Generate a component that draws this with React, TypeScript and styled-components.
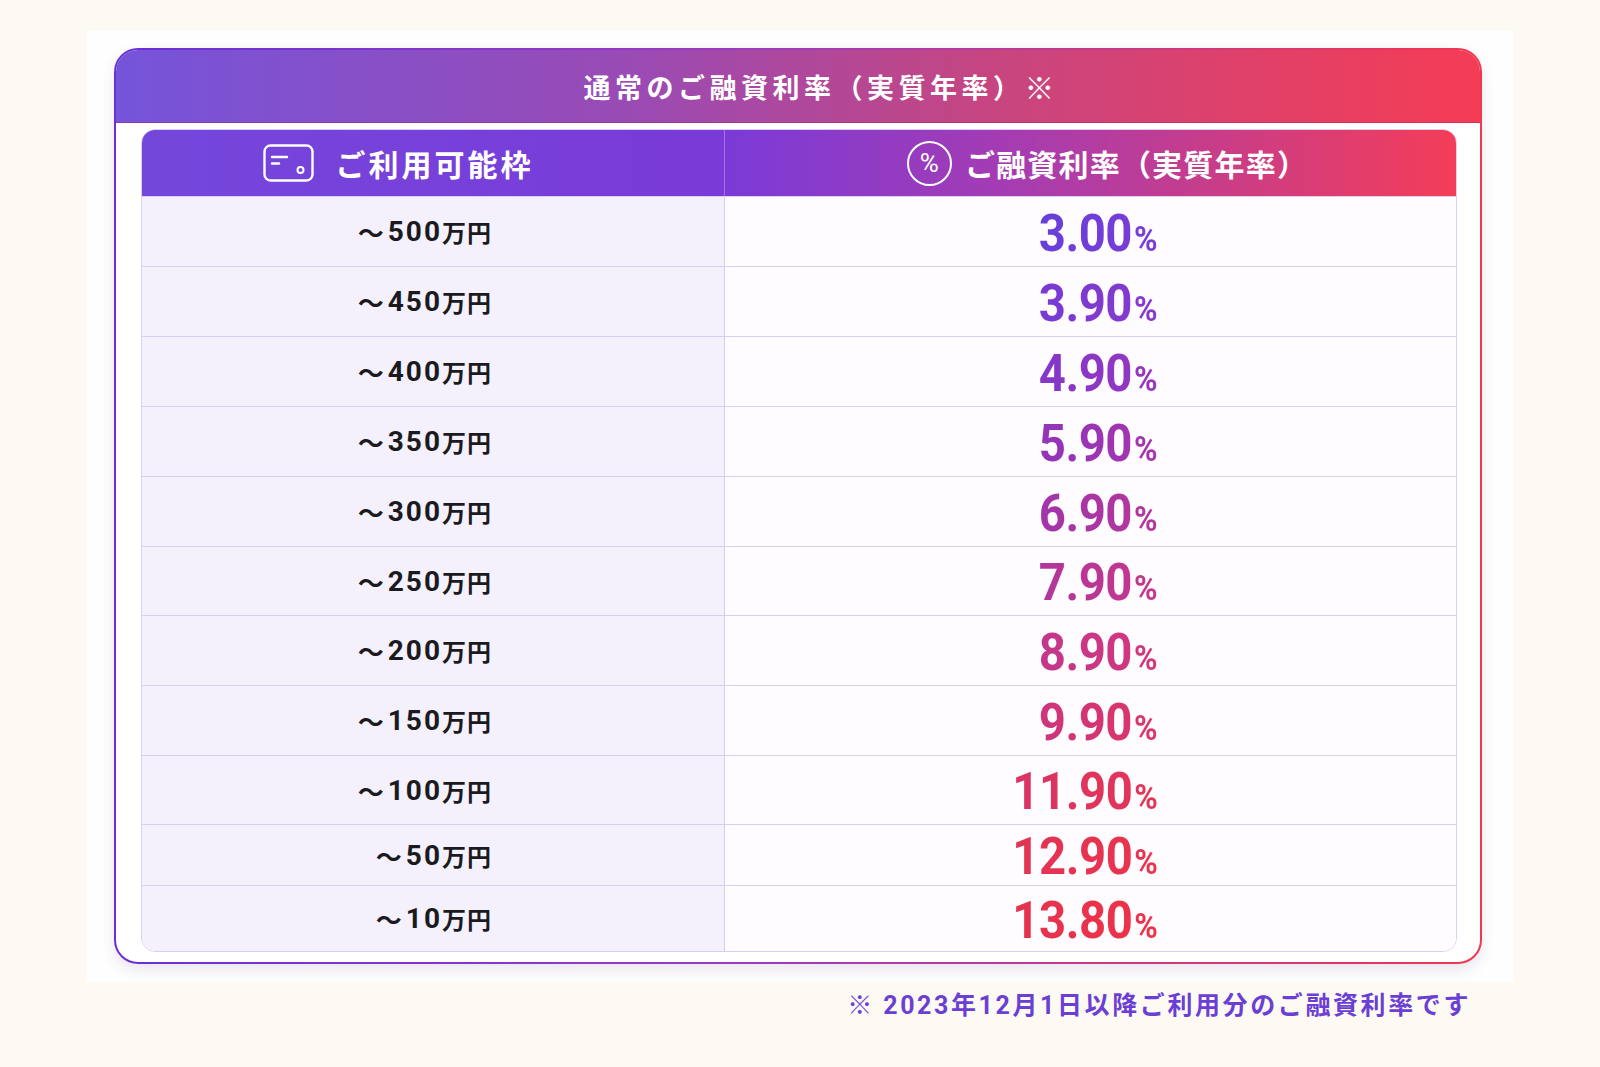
import styled, { createGlobalStyle } from 'styled-components'

const GlobalStyle = createGlobalStyle`
  body {
    margin: 0;
    background: #fdfaf3;
    font-family: 'Roboto', 'Noto Sans CJK JP', sans-serif;
  }
`

const Page = styled.div`
  display: flex;
  flex-direction: column;
  align-items: center;
  padding-top: 31px;
`

const Panel = styled.div`
  width: 1426px;
  box-sizing: border-box;
  background: #fefefe;
  padding: 17px 31px 18px 27px;
`

const Card = styled.div`
  display: flex;
  flex-direction: column;
  border: 2px solid transparent;
  border-radius: 24px;
  background:
    linear-gradient(#ffffff, #ffffff) padding-box,
    linear-gradient(90deg, #6a2fd8 0%, #9a3cc0 45%, #f2364f 100%) border-box;
  box-shadow: 0 6px 14px rgba(90, 50, 130, 0.12);
  padding-bottom: 10px;
`

const CardTitle = styled.div`
  height: 72px;
  display: flex;
  align-items: center;
  justify-content: center;
  padding-left: 46px;
  border-radius: 22px 22px 0 0;
  background: linear-gradient(90deg, #7554da 0%, #9a4bb4 38%, #c8457f 65%, #f53c55 100%);
  border-bottom: 1px solid rgba(170, 20, 80, 0.35);
  color: #ffffff;
  font-family: 'Noto Sans CJK JP', sans-serif;
  font-size: 27px;
  font-weight: 700;
  letter-spacing: 4.5px;
`

const Mark = styled.span`
  font-weight: 900;
  font-size: 1.1em;
`

const Table = styled.div`
  margin: 6px 23px 0 25px;
  border: 1px solid #dccff3;
  border-radius: 14px;
  overflow: hidden;
`

const HeadRow = styled.div`
  display: grid;
  grid-template-columns: 583px 1fr;
  height: 66px;
  background: linear-gradient(90deg, #7447db 0%, #7a3ad8 44%, #a53cb2 66%, #d23d7d 86%, #f43d58 100%);
`

const HeadCell = styled.div<{ $left?: boolean }>`
  display: flex;
  align-items: center;
  justify-content: center;
  gap: ${(p) => (p.$left ? '22px' : '13px')};
  padding: ${(p) => (p.$left ? '0 70px 0 0' : '0 0 0 34px')};
  border-right: ${(p) => (p.$left ? '1px solid rgba(255, 255, 255, 0.3)' : 'none')};
  color: #ffffff;
  font-family: 'Noto Sans CJK JP', sans-serif;
  font-size: 30px;
  font-weight: 700;
  letter-spacing: ${(p) => (p.$left ? '3px' : '1.2px')};
`

const PercentBadge = styled.span`
  width: 41px;
  height: 41px;
  border: 2px solid #ffffff;
  border-radius: 50%;
  display: flex;
  align-items: center;
  justify-content: center;
  font-family: 'Roboto', sans-serif;
  font-size: 26px;
  font-weight: 400;
  letter-spacing: 0;
`

const Row = styled.div<{ $h: number }>`
  display: grid;
  grid-template-columns: 583px 1fr;
  height: ${(p) => p.$h}px;
  border-top: 1px solid #dccff3;
  box-sizing: border-box;
`

const LimitCell = styled.div`
  display: flex;
  align-items: center;
  justify-content: flex-end;
  padding-right: 232px;
  background: #f5f1fc;
  border-right: 1px solid #d9cbf1;
  color: #1b1b1f;
  font-size: 28px;
  font-weight: 700;
  letter-spacing: 2px;
`

const Yen = styled.span`
  font-family: 'Noto Sans CJK JP', sans-serif;
  font-size: 24px;
  letter-spacing: 1px;
`

const Tilde = styled.span`
  font-family: 'Noto Sans CJK JP', sans-serif;
  font-size: 26px;
  margin-right: 2px;
`

const RateCell = styled.div`
  display: flex;
  align-items: center;
  justify-content: flex-end;
  padding-right: 299px;
  background: #fefcfe;
`

const Rate = styled.span<{ $from: string; $to: string }>`
  display: inline-block;
  font-family: 'Roboto', sans-serif;
  font-weight: 700;
  font-size: 52px;
  line-height: 1;
  letter-spacing: -0.5px;
  background: linear-gradient(90deg, ${(p) => p.$from}, ${(p) => p.$to});
  -webkit-background-clip: text;
  background-clip: text;
  color: transparent;
  padding-top: 4px;
  transform: scaleX(0.91);
  transform-origin: right center;
`

const Pct = styled.span`
  font-size: 35px;
  margin-left: 2px;
`

const Note = styled.div`
  width: 1426px;
  box-sizing: border-box;
  text-align: right;
  padding: 3px 42px 0 0;
  color: #6b3fd3;
  font-size: 25px;
  font-weight: 700;
  letter-spacing: 2.6px;
`

const NoteMark = styled.span`
  font-family: 'Noto Sans CJK JP', sans-serif;
  font-weight: 900;
`

const CardIcon = () => (
  <svg width="51" height="38" viewBox="0 0 51 38" fill="none" stroke="#ffffff" strokeWidth="2.4" strokeLinecap="round">
    <rect x="1.5" y="1.5" width="48" height="35" rx="6" />
    <line x1="9" y1="13" x2="24" y2="13" />
    <line x1="9" y1="19.5" x2="16" y2="19.5" />
    <circle cx="37.5" cy="26" r="3" strokeWidth="2" />
  </svg>
)

const rows = [
  { limit: '500', rate: '3.00', from: '#683fda', to: '#7a3cd6', h: 70 },
  { limit: '450', rate: '3.90', from: '#773bd3', to: '#8839cc', h: 70 },
  { limit: '400', rate: '4.90', from: '#8437c8', to: '#9636bf', h: 70 },
  { limit: '350', rate: '5.90', from: '#9234ba', to: '#a635ad', h: 70 },
  { limit: '300', rate: '6.90', from: '#a135aa', to: '#b5369c', h: 70 },
  { limit: '250', rate: '7.90', from: '#b1369c', to: '#c6378c', h: 69 },
  { limit: '200', rate: '8.90', from: '#c2378b', to: '#d4377b', h: 70 },
  { limit: '150', rate: '9.90', from: '#cd367c', to: '#dc356a', h: 70 },
  { limit: '100', rate: '11.90', from: '#d93564', to: '#e53456', h: 69 },
  { limit: '50', rate: '12.90', from: '#e13454', to: '#eb334e', h: 61 },
  { limit: '10', rate: '13.80', from: '#e4334e', to: '#ee3248', h: 66 },
]

const App = () => {
  return (
    <>
      <GlobalStyle />
      <Page>
        <Panel>
          <Card>
            <CardTitle>
              通常のご融資利率（実質年率）<Mark>※</Mark>
            </CardTitle>
            <Table>
              <HeadRow>
                <HeadCell $left>
                  <CardIcon />
                  <span>ご利用可能枠</span>
                </HeadCell>
                <HeadCell>
                  <PercentBadge>%</PercentBadge>
                  <span>ご融資利率（実質年率）</span>
                </HeadCell>
              </HeadRow>
              {rows.map((row) => (
                <Row key={row.limit} $h={row.h}>
                  <LimitCell>
                    <Tilde>～</Tilde>
                    {row.limit}
                    <Yen>万円</Yen>
                  </LimitCell>
                  <RateCell>
                    <Rate $from={row.from} $to={row.to}>
                      {row.rate}
                      <Pct>%</Pct>
                    </Rate>
                  </RateCell>
                </Row>
              ))}
            </Table>
          </Card>
        </Panel>
        <Note>
          <NoteMark>※ </NoteMark>2023年12月1日以降ご利用分のご融資利率です
        </Note>
      </Page>
    </>
  )
}

export default App
